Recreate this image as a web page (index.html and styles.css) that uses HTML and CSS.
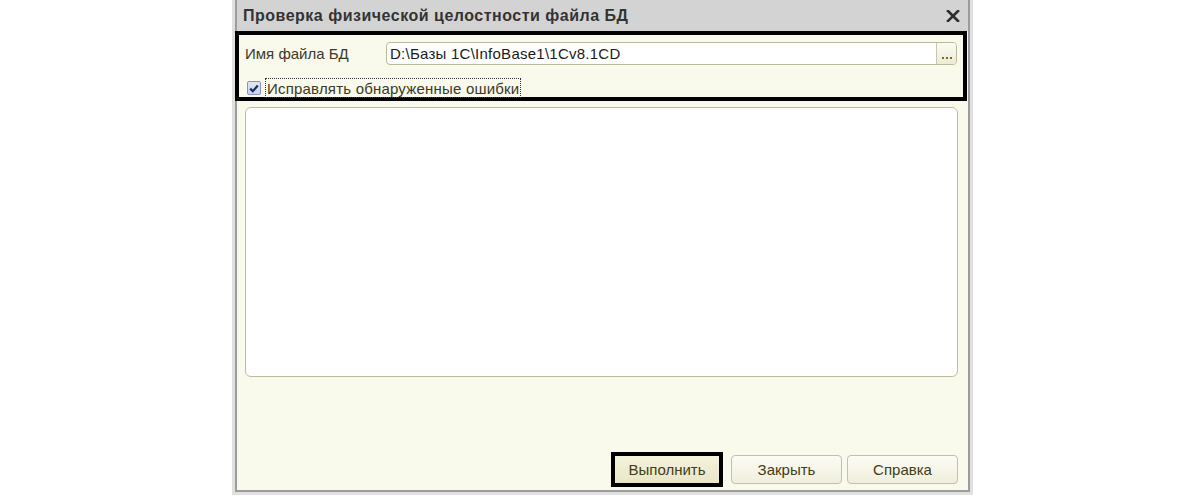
FILE: index.html
```html
<!DOCTYPE html>
<html lang="ru">
<head>
<meta charset="utf-8">
<title>Проверка физической целостности файла БД</title>
<link rel="stylesheet" href="styles.css">
</head>
<body>
<div class="page">
  <div class="window">
    <div class="frame">
      <div class="titlebar">
        <span class="title">Проверка физической целостности файла БД</span>
        <svg class="close" width="14" height="12" viewBox="0 0 14 12"><path d="M2 1 L12 11 M12 1 L2 11" stroke="#2e2e2e" stroke-width="2.6" stroke-linecap="square"/></svg>
      </div>
      <div class="params">
        <div class="row-file">
          <span class="label">Имя файла БД</span>
          <div class="input">
            <span class="input-text">D:\Базы 1C\InfoBase1\1Cv8.1CD</span>
            <span class="choose"><i></i><i></i><i></i></span>
          </div>
        </div>
        <div class="row-check">
          <span class="checkbox">
            <svg width="10" height="9" viewBox="0 0 10 9"><path d="M1.2 4.6 L3.8 7.2 L8.8 1.6" fill="none" stroke="#1d2a55" stroke-width="2.2"/></svg>
          </span>
          <span class="check-label">Исправлять обнаруженные ошибки</span>
        </div>
      </div>
      <div class="log"></div>
      <div class="footer">
        <div class="default-frame"><button class="btn btn-default">Выполнить</button></div>
        <button class="btn btn-close">Закрыть</button>
        <button class="btn btn-help">Справка</button>
      </div>
    </div>
  </div>
</div>
</body>
</html>
```

FILE: styles.css
```css
html, body {
  margin: 0;
  padding: 0;
  background: #ffffff;
}

body {
  font-family: "Liberation Sans", Arial, sans-serif;
}

.page {
  padding-left: 232px;
}

.window {
  width: 741px;
  height: 495px;
  box-sizing: border-box;
  border: 3px solid #e0e0e0;
  border-top: 0;
  display: flex;
  flex-direction: column;
}

.frame {
  flex: 1;
  display: flex;
  flex-direction: column;
  background: #f9f9ec;
  border: 2px solid #9c9c9c;
  border-top: 0;
}

.titlebar {
  height: 31px;
  flex: none;
  background: #d3d3d3;
  display: flex;
  align-items: center;
  justify-content: space-between;
  padding: 0 8px 0 6px;
}

.title {
  font-weight: bold;
  font-size: 16px;
  color: #333333;
  letter-spacing: 0.5px;
}

.close {
  display: block;
  margin-top: 1px;
}

.params {
  height: 70px;
  box-sizing: border-box;
  margin: 0 1px 0 -2px;
  border: 4px solid #000000;
  padding: 7px 6px 0 6px;
}

.row-file {
  display: flex;
  align-items: center;
  height: 23px;
}

.label {
  width: 141px;
  flex: none;
  font-size: 15px;
  color: #3a3a2a;
}

.input {
  flex: 1;
  height: 23px;
  box-sizing: border-box;
  display: flex;
  align-items: center;
  background: #ffffff;
  border: 1px solid #b9b89e;
  border-radius: 4px;
  overflow: hidden;
}

.input-text {
  flex: 1;
  padding-left: 3px;
  font-size: 15px;
  letter-spacing: 0.25px;
  color: #1a1a1a;
}

.choose {
  width: 20px;
  height: 100%;
  flex: none;
  box-sizing: border-box;
  border-left: 1px solid #c9c7ae;
  background: linear-gradient(#fbfbf3, #ecebd6);
  display: flex;
  align-items: flex-end;
  justify-content: center;
  gap: 2px;
  padding-bottom: 5px;
}

.choose i {
  width: 2px;
  height: 2px;
  background: #7d6d10;
}

.row-check {
  display: flex;
  align-items: center;
  margin-top: 13px;
  padding-left: 2px;
  height: 20px;
}

.checkbox {
  width: 14px;
  height: 14px;
  box-sizing: border-box;
  border: 1px solid #8a90b8;
  border-radius: 2px;
  background: linear-gradient(#dfe6f7, #c7d3f0);
  display: flex;
  align-items: center;
  justify-content: center;
  flex: none;
}

.check-label {
  margin-left: 4px;
  height: 20px;
  box-sizing: border-box;
  border: 1px dotted #333333;
  padding: 0 1px;
  display: flex;
  align-items: center;
  font-size: 15px;
  letter-spacing: 0.2px;
  color: #3a3a2a;
}

.log {
  margin: 6px 10px 0 8px;
  height: 270px;
  box-sizing: border-box;
  background: #ffffff;
  border: 1px solid #bdbca3;
  border-radius: 6px;
}

.footer {
  margin-top: auto;
  display: flex;
  justify-content: flex-end;
  align-items: center;
  padding: 0 10px 3px 0;
}

.btn {
  width: 111px;
  height: 29px;
  box-sizing: border-box;
  font-family: "Liberation Sans", Arial, sans-serif;
  font-size: 15px;
  color: #3e3e16;
  background: linear-gradient(#fcfcf4, #efeedd);
  border: 1px solid #c2c0a5;
  border-radius: 4px;
  padding: 0;
}

.default-frame {
  border: 4px solid #000000;
  height: 35px;
  box-sizing: border-box;
  display: flex;
  align-items: center;
  justify-content: center;
  width: 112px;
  margin-right: 8px;
}

.btn-default {
  width: 104px;
  height: 27px;
  border: 0;
  border-radius: 0;
  background: linear-gradient(#f6f3dc, #e9e5c8);
}

.btn-close {
  margin-right: 5px;
}
```
